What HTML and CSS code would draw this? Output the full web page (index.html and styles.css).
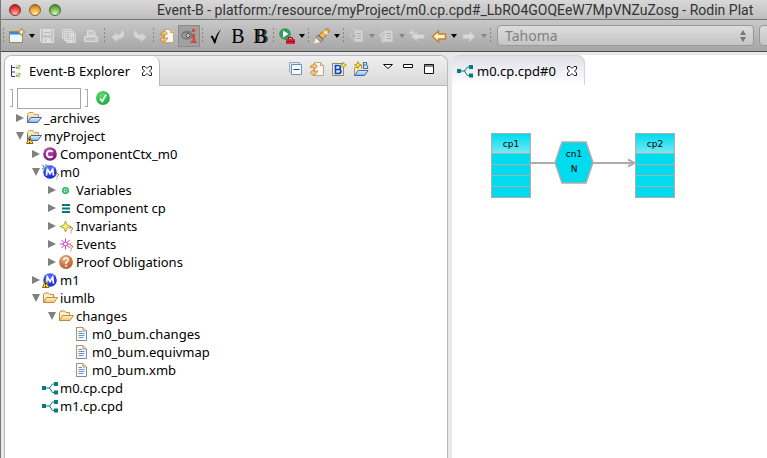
FILE: index.html
```html
<!DOCTYPE html>
<html lang="en">
<head>
<meta charset="utf-8">
<title>Event-B - Rodin Platform</title>
<link rel="stylesheet" href="styles.css">
</head>
<body>
<svg class="defs" aria-hidden="true">
  <defs>
    <linearGradient id="gFold" x1="0" y1="0" x2="0" y2="1"><stop offset="0" stop-color="#fff3d0"/><stop offset="1" stop-color="#f0c36c"/></linearGradient>
    <linearGradient id="gBlue" x1="0" y1="0" x2="0" y2="1"><stop offset="0" stop-color="#e4f1ff"/><stop offset="1" stop-color="#7fb2e8"/></linearGradient>
    <radialGradient id="gGreen" cx=".4" cy=".3" r=".8"><stop offset="0" stop-color="#5fdc70"/><stop offset="1" stop-color="#0da637"/></radialGradient>
    <radialGradient id="gOrange" cx=".4" cy=".25" r=".8"><stop offset="0" stop-color="#eab184"/><stop offset="1" stop-color="#b2571e"/></radialGradient>
    <radialGradient id="gPurple" cx=".4" cy=".25" r=".8"><stop offset="0" stop-color="#bb55b0"/><stop offset="1" stop-color="#7c0874"/></radialGradient>
    <radialGradient id="gM" cx=".4" cy=".25" r=".8"><stop offset="0" stop-color="#5570ff"/><stop offset="1" stop-color="#0a20d8"/></radialGradient>
  </defs>
  <symbol id="warn" viewBox="0 0 16 16"><path d="M3.500 8.500 L7 15.500 H.500 Z" fill="#ffe14a" stroke="#8a6a10"/><path d="M3.700 10.500V13M3.700 14V15" stroke="#000"/></symbol>
  <symbol id="folder-p" viewBox="0 0 16 16"><path d="M1.500 12.500V4.500L3 2.500H7L8.500 4.500H12.500V7" fill="url(#gFold)" stroke="#c99b4e"/><path d="M1.500 12.500V6" stroke="#5578a8"/><path d="M1.500 12.500L5 7.500H15.500L11.500 12.500Z" fill="url(#gBlue)" stroke="#3e68ac"/></symbol>
  <symbol id="folder" viewBox="0 0 16 16"><path d="M1.500 12.500V4.500L3 3H6.500L8 4.500H11.500V7" fill="#fff0cc" stroke="#c48a3c"/><path d="M1.500 12.500L4.500 7.500H15.500L12 12.500Z" fill="url(#gFold)" stroke="#c48a3c"/></symbol>
  <symbol id="ctx" viewBox="0 0 16 16"><circle cx="8" cy="8" r="6.800" fill="url(#gPurple)"/><path d="M10.700 5.900A3.300 3.300 0 1 0 10.700 10.100" fill="none" stroke="#fff" stroke-width="2"/></symbol>
  <symbol id="mch" viewBox="0 0 16 16"><circle cx="8" cy="8" r="6.800" fill="url(#gM)"/><path d="M4.500 11.500L5.300 5L8 9.500L10.700 5L11.500 11.500" fill="none" stroke="#fff" stroke-width="1.700"/></symbol>
  <symbol id="sparks" viewBox="0 0 16 16"><path d="M0 1L2 2M4 0V2M0 5L2 4M6 1L5 3M3 4H6M1 3H4" stroke="#4489a4"/></symbol>
  <symbol id="q" viewBox="0 0 16 16"><path d="M11.500 10.500Q13 8.500 14.500 10Q15 11.500 13 12.500V13.500M13 14.500V15.500" fill="none" stroke="#c56a35"/></symbol>
  <symbol id="var" viewBox="0 0 16 16"><circle cx="7.500" cy="8.500" r="2.700" fill="#e7ffe9" stroke="#25b467" stroke-width="1.600"/><path d="M6 8.500H9M7.500 7V10" stroke="#42c983"/></symbol>
  <symbol id="comp" viewBox="0 0 16 16"><path d="M4 5H12M4 8.500H12M4 12H12" stroke="#08767a" stroke-width="2"/></symbol>
  <symbol id="inv" viewBox="0 0 16 16"><path d="M7.500 3L9 7L13 8.500L9 10L7.500 14L6 10L2 8.500L6 7Z" fill="#fff36a" stroke="#a08e20" stroke-width=".800"/></symbol>
  <symbol id="evt" viewBox="0 0 16 16"><path d="M7.500 2.500V13.500M2 8H13M3.500 4L11.500 12M11.500 4L3.500 12" stroke="#cf39bd"/><circle cx="7.500" cy="8" r="2" fill="#fff" stroke="#d93bc9"/></symbol>
  <symbol id="po" viewBox="0 0 16 16"><circle cx="8" cy="8" r="6.900" fill="url(#gOrange)"/><path d="M5.700 6.200Q5.800 4 8 4Q10.500 4 10.300 6.200Q10 7.500 8 8.500V10" fill="none" stroke="#fff" stroke-width="1.500"/><path d="M7.200 11.200h1.700v1.600H7.200z" fill="#fff"/></symbol>
  <symbol id="file" viewBox="0 0 16 16"><path d="M2.500 1.500H9L12.500 5V14.500H2.500Z" fill="#f5f9ff" stroke="#7c8ba4"/><path d="M2.500 14.500V1.500H9" fill="none" stroke="#aa9861"/><path d="M9 1.500V5H12.500" fill="#f2dca0" stroke="#b8995a"/><path d="M4.500 5.500H8M4.500 7.500H10.500M4.500 9.500H10.500M4.500 11.500H9.500" stroke="#6b92d2"/></symbol>
  <symbol id="cpd" viewBox="0 0 16 16"><path d="M0 6h4v4H0zM12 2h4v4h-4zM12 10.500h4v4h-4z" fill="#087b7e"/><path d="M4 8H8M12 4H10.500L7.500 8L10.500 12.500H12" fill="none" stroke="#087b7e"/></symbol>
  <symbol id="close" viewBox="0 0 12 12"><path d="M1.500 1.500H4L6 3.500L8 1.500H10.500V4L8.500 6L10.500 8V10.500H8L6 8.500L4 10.500H1.500V8L3.500 6L1.500 4Z" fill="#fff" stroke="#222"/></symbol>
  <symbol id="star" viewBox="0 0 8 8"><path d="M4 .500L5 3L7.500 4L5 5L4 7.500L3 5L.500 4L3 3Z" fill="#ffed3a" stroke="#a68912" stroke-width=".800"/></symbol>
  <symbol id="sync" viewBox="0 0 16 16"><path d="M5.500 1.500H11.500L14.500 4.500V14.500H5.500Z" fill="#f8f7f3" stroke="#c1a875"/><path d="M11.500 1.500V4.500H14.500" fill="#ead8ab" stroke="#c1a875"/><path d="M1 6.500Q2 3 5 4V2L8.500 5.500L5 8.500V6.500Q3 6 1 6.500ZM8.500 9.500Q8 13.500 5 13V15L1 11.500L5 8.500V10.500Q7 11 8.500 9.500Z" fill="#f7c871" stroke="#bd8740" stroke-width=".800"/></symbol>
  <symbol id="import" viewBox="0 0 16 16"><path d="M5.500 2.500H13.500V13.500H5.500Z" fill="#d5d5d5" stroke="#c7c7c7"/><path d="M7.500 5.500H12M7.500 8H12M7.500 10.500H12" stroke="#a9a9a9"/></symbol>
</svg>

<div class="window">
  <header class="titlebar">
    <div class="lights">
      <button class="light red" aria-label="Close"></button>
      <button class="light amber" aria-label="Minimize"></button>
      <button class="light green" aria-label="Zoom"></button>
    </div>
    <h1 class="title">Event-B - platform:/resource/myProject/m0.cp.cpd#_LbRO4GOQEeW7MpVNZuZosg - Rodin Plat</h1>
  </header>

  <div class="toolbar">
    <span class="sep"></span>
    <button class="tool" aria-label="New"><svg viewBox="0 0 16 16"><path d="M.500 3.500H13.500V14.500H.500Z" fill="#eaf5fc" stroke="#a78a52"/><path d="M1 4H11V6.500H1Z" fill="#3589cb"/><path d="M12.500 0L13.700 2.800L16 4L13.700 5.200L12.500 8L11.300 5.200L9 4L11.300 2.800Z" fill="#fff0a8" stroke="#b3893c"/></svg></button>
    <button class="drop" aria-label="New menu"></button>
    <button class="tool" aria-label="Save" disabled><svg viewBox="0 0 16 16"><path d="M1.500 1.500H14.500V14.500H2.500L1.500 13.500Z" fill="#c4c4c4" stroke="#dedede"/><path d="M4 2h8v5H4zM4 10h8v4H4z" fill="#dcdcdc"/><path d="M5 4.500H11M6.500 11V14" stroke="#b8b8b8"/></svg></button>
    <button class="tool" aria-label="Save all" disabled><svg viewBox="0 0 16 16"><path d="M1.500 1.500H10.500V10.500H1.500ZM3.500 3.500H12.500V12.500H3.500ZM5.500 5.500H14.500V14.500H5.500Z" fill="#c4c4c4" stroke="#dadada"/><path d="M8 6h4v3H8zM8 11.500h4V14H8z" fill="#dcdcdc"/></svg></button>
    <button class="tool" aria-label="Print" disabled><svg viewBox="0 0 16 16"><path d="M4.500 8V2.500H10L12 4.500V8" fill="#cfcfcf" stroke="#dedede"/><path d="M1.500 8.500H14.500V13.500H1.500Z" fill="#c6c6c6" stroke="#dedede"/><path d="M6 5H10M4 11H12" stroke="#b5b5b5"/></svg></button>
    <span class="sep"></span>
    <button class="tool" aria-label="Undo" disabled><svg viewBox="0 0 16 16"><path d="M1.500 9L7 4.500V7Q11 7 12 2Q15 4 14 8Q12 11 7 11.500V14Z" fill="#d6d6d6" stroke="#c5c5c5" stroke-width=".600"/></svg></button>
    <button class="tool" aria-label="Redo" disabled><svg viewBox="0 0 16 16"><path d="M14.500 9L9 4.500V7Q5 7 4 2Q1 4 2 8Q4 11 9 11.500V14Z" fill="#d6d6d6" stroke="#c5c5c5" stroke-width=".600"/></svg></button>
    <span class="sep"></span>
    <button class="tool" aria-label="Refresh"><svg><use href="#sync"/></svg></button>
    <button class="tool pressed" aria-label="Show information" aria-pressed="true"><svg viewBox="0 0 16 16"><ellipse cx="6" cy="7.500" rx="5.500" ry="3.500" fill="#999" stroke="#686868"/><circle cx="7" cy="7.500" r="2" fill="#c8c8c8" stroke="#555"/><path d="M1 5Q5 1.500 10 4" fill="none" stroke="#777"/><circle cx="12.500" cy="2.500" r="1.700" fill="#cf493b"/><path d="M10 6H14V13H15.500V15H9.500V13H11.500V8H10Z" fill="#cf493b"/></svg></button>
    <span class="sep"></span>
    <button class="tool" aria-label="Check"><svg viewBox="0 0 16 16"><path d="M2.500 8.500L4.500 7.500L6.700 11.500Q9 5 13 1Q9 8 7.300 15.500H6.200Q4.500 10.500 2.500 8.500Z" fill="#000"/></svg></button>
    <button class="tool letter" aria-label="Bold B">B</button>
    <button class="tool letter double" aria-label="Double B">B</button>
    <span class="sep"></span>
    <button class="tool" aria-label="Run"><svg viewBox="0 0 16 16"><circle cx="6" cy="6" r="5.800" fill="#319c57"/><path d="M4 2.500L9.500 6L4 9.500Z" fill="#fff"/><path d="M7 11h9v5H7z" fill="#d9232e"/><path d="M9.500 11V9.500H13.500V11M7 13.500H16" fill="none" stroke="#8e1220"/></svg></button>
    <button class="drop" aria-label="Run menu"></button>
    <span class="sep"></span>
    <button class="tool" aria-label="Search"><svg viewBox="0 0 16 16"><path d="M5 7L12 1Q15 0 15.500 3L9 11Z" fill="#efb756" stroke="#a77532"/><path d="M10 3L13.500 6" stroke="#fff0bd" stroke-width="2"/><path d="M4 7L9 12L6.500 14L2 9.500Z" fill="#a9a6b0" stroke="#76737b"/><path d="M2 10L6 14L0 15.500Z" fill="#fff3bd"/></svg></button>
    <button class="drop" aria-label="Search menu"></button>
    <span class="sep"></span>
    <button class="tool" aria-label="Next annotation" disabled><svg viewBox="0 0 16 16"><use href="#import"/><path d="M3 1H6V7H8.500L4.500 11.500L.500 7H3Z" fill="#b4b4b4" stroke="#d5d5d5" stroke-width=".700"/></svg></button>
    <button class="drop off" aria-label="Next annotation menu" disabled></button>
    <button class="tool" aria-label="Previous annotation" disabled><svg viewBox="0 0 16 16"><use href="#import"/><path d="M3 14H6V8H8.500L4.500 3.500L.500 8H3Z" fill="#c5c5c5" stroke="#dedede" stroke-width=".700"/></svg></button>
    <button class="drop off" aria-label="Previous annotation menu" disabled></button>
    <button class="tool" aria-label="Last edit location" disabled><svg viewBox="0 0 16 16"><path d="M2.500 8.500L8 4V6.500H15V10.500H8V13Z" fill="#d9d9d9" stroke="#c4c4c4"/><path d="M3 2V7M.500 4.500H5.500M1 2.500L5 6.500M5 2.500L1 6.500" stroke="#d7d7d7"/></svg></button>
    <button class="tool" aria-label="Back"><svg viewBox="0 0 16 16"><path d="M1.500 8.500L7.500 3V6H14.500V11H7.500V14Z" fill="#fff1bd" stroke="#bd8432" stroke-width="1.400"/></svg></button>
    <button class="drop" aria-label="Back menu"></button>
    <button class="tool" aria-label="Forward" disabled><svg viewBox="0 0 16 16"><path d="M14 8.500L8.500 3.500V6.500H2V10.500H8.500V13.500Z" fill="#d9d9d9" stroke="#c8c8c8"/></svg></button>
    <button class="drop off" aria-label="Forward menu" disabled></button>
    <span class="sep"></span>
    <div class="combo font-combo">
      <select aria-label="Font" disabled><option>Tahoma</option></select>
      <svg class="stepper" viewBox="0 0 6 12"><path d="M3 0L6 5H0ZM3 12L6 7H0Z" fill="#777"/></svg>
    </div>
    <div class="combo size-combo"><select aria-label="Font size" disabled><option></option></select></div>
  </div>

  <main class="workbench">
    <section class="explorer">
      <div class="tabbar">
        <div class="tab explorer-tab">
          <svg class="tab-icon" viewBox="0 0 16 16"><path d="M3.500 2V13.500H7M3.500 4.500H7M3.500 9H7" fill="none" stroke="#30358e"/><path d="M8 2h4v4H8zM8 10h4v4H8z" fill="#f2efc7" stroke="#c4bb7f" stroke-width=".500"/><path d="M8 4L9.500 5.500L12 2M8 12L9.500 13.500L12 10" fill="none" stroke="#44a54c"/></svg>
          <span class="tab-name">Event-B Explorer</span>
          <button class="close" aria-label="Close Event-B Explorer"><svg><use href="#close"/></svg></button>
        </div>
        <div class="view-tools">
          <button class="tool" aria-label="Collapse all"><svg viewBox="0 0 16 16"><path d="M2.500 11.500V1.500H12.500V4" fill="none" stroke="#8fa9c6"/><path d="M4.500 3.500H14.500V13.500H4.500Z" fill="#f6faff" stroke="#6e8fb4"/><path d="M6.500 8.500H12.500" stroke="#15518b"/></svg></button>
          <button class="tool" aria-label="Link with editor"><svg><use href="#sync"/></svg></button>
          <button class="tool" aria-label="New component"><svg viewBox="0 0 16 16"><path d="M1.500 2.500H12.500V14.500H1.500Z" fill="#e5eff9" stroke="#a08352"/><path d="M4.500 4.500V12.500M3.500 4.500H7Q9.500 4.500 9.500 6.500T7 8.500H5M7 8.500Q10 8.500 10 10.500T7 12.500H3.500" fill="none" stroke="#1647b8" stroke-width="1.700"/><use href="#star" x="9" y="0" width="7" height="8"/></svg></button>
          <button class="tool" aria-label="New project"><svg viewBox="0 0 16 16"><path d="M1.500 14V6.500H4L6 4.500H8.500V8" fill="#ffe9b4" stroke="#bd9655"/><path d="M1.500 14.500L5 9.500H15L11.500 14.500Z" fill="url(#gBlue)" stroke="#3e68ac"/><path d="M10.500 1V8M10 1.500H13.500V4H10.500M14.500 4.500V7.500H10" fill="none" stroke="#397ba2" stroke-width="1.200"/><use href="#star" x="1" y="0" width="8" height="8"/></svg></button>
          <button class="tool small menu" aria-label="View menu"><svg viewBox="0 0 16 16"><path d="M3.500 3.500H12.500L8 7.500Z" fill="#fff" stroke="#111"/></svg></button>
          <button class="tool small" aria-label="Minimize view"><svg viewBox="0 0 16 16"><path d="M3.500 3.500H12.500V6.500H3.500Z" fill="#fff" stroke="#111"/></svg></button>
          <button class="tool" aria-label="Maximize view"><svg viewBox="0 0 16 16"><path d="M3.500 3.500H12.500V12.500H3.500ZM3 5H13" fill="#fff" stroke="#111"/></svg></button>
        </div>
      </div>
      <div class="filter">
        <span class="bracket"></span>
        <input type="text" aria-label="Filter">
        <span class="bracket"></span>
        <button class="tool ok" aria-label="Show discharged obligations"><svg viewBox="0 0 16 16"><circle cx="8" cy="8" r="6.900" fill="url(#gGreen)"/><path d="M5 8.500L7.200 11.500L11 4.500" fill="none" stroke="#fff" stroke-width="1.600"/></svg></button>
      </div>
      <ul class="tree">
        <li><div class="row"><i class="twisty"></i><svg><use href="#folder-p"/></svg><span>_archives</span></div></li>
        <li><div class="row"><i class="twisty open"></i><svg><use href="#folder-p"/><use href="#warn"/></svg><span>myProject</span></div>
          <ul>
            <li><div class="row"><i class="twisty"></i><svg><use href="#ctx"/></svg><span>ComponentCtx_m0</span></div></li>
            <li><div class="row"><i class="twisty open"></i><svg><use href="#mch"/><use href="#sparks"/><use href="#q" x="2"/></svg><span>m0</span></div>
              <ul>
                <li><div class="row"><i class="twisty"></i><svg><use href="#var"/></svg><span>Variables</span></div></li>
                <li><div class="row"><i class="twisty"></i><svg><use href="#comp"/></svg><span>Component cp</span></div></li>
                <li><div class="row"><i class="twisty"></i><svg><use href="#inv"/><use href="#q"/></svg><span>Invariants</span></div></li>
                <li><div class="row"><i class="twisty"></i><svg><use href="#evt"/><use href="#q"/></svg><span>Events</span></div></li>
                <li><div class="row"><i class="twisty"></i><svg><use href="#po"/></svg><span>Proof Obligations</span></div></li>
              </ul>
            </li>
            <li><div class="row"><i class="twisty"></i><svg><use href="#mch"/><use href="#warn"/></svg><span>m1</span></div></li>
            <li><div class="row"><i class="twisty open"></i><svg><use href="#folder"/></svg><span>iumlb</span></div>
              <ul>
                <li><div class="row"><i class="twisty open"></i><svg><use href="#folder"/></svg><span>changes</span></div>
                  <ul>
                    <li><div class="row"><i class="twisty leaf"></i><svg><use href="#file"/></svg><span>m0_bum.changes</span></div></li>
                    <li><div class="row"><i class="twisty leaf"></i><svg><use href="#file"/></svg><span>m0_bum.equivmap</span></div></li>
                    <li><div class="row"><i class="twisty leaf"></i><svg><use href="#file"/></svg><span>m0_bum.xmb</span></div></li>
                  </ul>
                </li>
              </ul>
            </li>
            <li><div class="row"><i class="twisty leaf"></i><svg><use href="#cpd"/></svg><span>m0.cp.cpd</span></div></li>
            <li><div class="row"><i class="twisty leaf"></i><svg><use href="#cpd"/></svg><span>m1.cp.cpd</span></div></li>
          </ul>
        </li>
      </ul>
    </section>

    <section class="editor">
      <div class="tab editor-tab">
        <svg class="tab-icon"><use href="#cpd"/></svg>
        <span class="tab-name">m0.cp.cpd#0</span>
        <button class="close" aria-label="Close m0.cp.cpd#0"><svg><use href="#close"/></svg></button>
      </div>
      <div class="canvas">
        <svg class="wires" viewBox="0 0 146 66"><path d="M39 30H64M102 30H142" stroke="#aeaeae" stroke-width="2"/><path d="M137 26.500L143.500 30L137 33.500" fill="none" stroke="#aeaeae" stroke-width="2"/></svg>
        <div class="component cp1"><b>cp1</b><i></i><i></i><i></i><i></i></div>
        <div class="connector"><svg viewBox="0 0 40 43"><path d="M8 1H32L39 21.500L32 42H8L1 21.500Z" fill="#00dbed" stroke="#aeaeae" stroke-width="1.500"/></svg><span>cn1</span><span>N</span></div>
        <div class="component cp2"><b>cp2</b><i></i><i></i><i></i><i></i></div>
      </div>
    </section>
  </main>
</div>
</body>
</html>
```
FILE: styles.css
```css
* { box-sizing: border-box; }

body {
  margin: 0;
  font: 13px/18px "Noto Sans", "Open Sans", sans-serif;
  color: #000;
  background: #e8e8e8;
}

button {
  padding: 0;
  border: 0;
  background: none;
  color: inherit;
  font: inherit;
}

svg { display: block; flex: none; overflow: visible; }
.defs { position: absolute; width: 0; height: 0; }

.window {
  display: flex;
  flex-direction: column;
  min-height: 100vh;
  overflow: hidden;
  border-left: 1px solid #777;
}

.titlebar {
  display: flex;
  align-items: center;
  height: 20px;
  gap: 96px;
  padding-left: 8px;
  background: linear-gradient(#d8d8d8, #bebebe);
  border-bottom: 1px solid #777;
}

.lights { display: flex; gap: 8px; }

.light {
  width: 12px;
  height: 12px;
  border: 1px solid #666;
  border-radius: 50%;
}
.red { background: radial-gradient(circle at 50% 90%, #ffc0b8, #e8433f 55%, #8e1c1c); border-color: #84302e; }
.amber { background: radial-gradient(circle at 50% 90%, #fff0a0, #eda33c 55%, #9a5c18); border-color: #8e6129; }
.green { background: radial-gradient(circle at 50% 90%, #dcffb8, #74b950 55%, #346e28); border-color: #41703a; }

.title {
  margin: 0;
  font: 400 14px/18px Roboto, "Noto Sans", sans-serif;
  white-space: nowrap;
  color: #333;
}

.toolbar {
  display: flex;
  align-items: center;
  height: 32px;
  background: linear-gradient(#c8c8c8, #a6a6a6);
  border-bottom: 1px solid #4c4c4c;
}

.tool {
  display: flex;
  flex: none;
  align-items: center;
  justify-content: center;
  width: 22px;
  height: 22px;
}
.tool svg { width: 16px; height: 16px; }
.pressed { background: #a0a0a0; border: 1px solid #8a8a8a; }

.letter { font: 20px/22px "Liberation Serif", serif; }
.double { text-shadow: 2px 0 #333; }

.drop {
  display: flex;
  flex: none;
  align-items: center;
  justify-content: center;
  width: 8px;
  height: 22px;
}
.drop::before {
  content: "";
  width: 0;
  border: 3px solid transparent;
  border-top: 4px solid #000;
  border-bottom: 0;
}
.off::before { border-top-color: #858585; }

.sep {
  flex: none;
  width: 5px;
  height: 16px;
  background: repeating-linear-gradient(#8b866d 0 2px, transparent 2px 4px) center / 1px 100% no-repeat;
}

.combo {
  display: flex;
  align-items: center;
  flex: none;
  height: 21px;
  margin-left: 4px;
  padding: 0 7px;
  border: 1px solid #999;
  border-radius: 4px;
  background: linear-gradient(#dcdcdc, #c5c5c5);
}
.combo select {
  flex: 1;
  min-width: 0;
  padding: 0;
  border: 0;
  appearance: none;
  background: none;
  color: #808080;
  opacity: 1;
  font: 14px/18px "Noto Sans", "Open Sans", sans-serif;
}
.font-combo { width: 257px; }
.size-combo { width: 60px; margin-left: 5px; }
.stepper { width: 6px; height: 12px; }

.workbench {
  display: flex;
  flex: 1;
  gap: 4px;
  padding: 3px 0 0 3px;
}

.explorer {
  flex: 0 1 444px;
  border: 1px solid #b8b8be;
  border-bottom: 0;
  border-radius: 8px 8px 0 0;
  background: #fff;
}

.tabbar {
  display: flex;
  justify-content: space-between;
  height: 30px;
  border-bottom: 1px solid #b8b8be;
  border-radius: 7px 7px 0 0;
  background: linear-gradient(#f0f0f0, #d9d9d9);
}

.tab { display: flex; align-items: center; height: 30px; }
.tab-icon { width: 16px; height: 16px; }
.tab-name { white-space: nowrap; }
.close svg { width: 12px; height: 12px; }

.explorer-tab {
  width: 155px;
  gap: 5px;
  padding-left: 3px;
  border-right: 1px solid #b8b8be;
  border-radius: 7px 7px 0 0;
  background: #fff;
}
.explorer-tab .close, .editor-tab .close { margin-left: auto; margin-right: 6px; }

.view-tools { display: flex; padding: 2px 7px 0 0; }
.small { width: 20px; }
.menu { margin-left: 6px; }

.filter {
  display: flex;
  align-items: center;
  gap: 4px;
  height: 22px;
  margin-top: 1px;
  padding-left: 5px;
}
.filter input {
  width: 64px;
  height: 21px;
  padding: 0 3px;
  border: 1px solid #a6a6a6;
  font: inherit;
}
.bracket {
  width: 3px;
  height: 18px;
  border: 1px solid #a9a9a9;
  border-left: 0;
}

.tree, .tree ul { margin: 0; padding: 0; list-style: none; }
.tree { padding-left: 11px; }
.tree ul { padding-left: 16px; }

.row { display: flex; align-items: center; height: 18px; white-space: nowrap; }
.row svg { width: 16px; height: 16px; margin-right: 2px; }

.twisty { flex: none; width: 10px; }
.twisty::before {
  content: "";
  display: block;
  width: 0;
  border: 4px solid transparent;
  border-left: 8px solid #808080;
  border-right: 0;
}
.open::before {
  border: 4px solid transparent;
  border-top: 8px solid #808080;
  border-bottom: 0;
}
.leaf::before { visibility: hidden; }

.editor {
  flex: 1;
  min-width: 0;
  border-radius: 8px 0 0 0;
  background: #fff;
}
.editor-tab {
  width: 133px;
  gap: 4px;
  padding-left: 5px;
  border: 1px solid #d2d3da;
  border-width: 1px 1px 0 0;
  border-radius: 8px 8px 0 0;
  background: linear-gradient(#dfe0e7, #fff);
}

/* Diagram nodes sit at free positions on the canvas. */
.canvas { position: relative; height: 300px; }
.canvas > * { position: absolute; }
.wires { left: 39px; top: 48px; width: 146px; height: 66px; }
.component {
  top: 48px;
  width: 40px;
  border: 1px solid #aeaeae;
  background: #00dbed;
  font: 9px/20px "DejaVu Sans", sans-serif;
  text-align: center;
}
.component b {
  display: block;
  height: 19px;
  font-weight: 400;
  background: linear-gradient(#00dbed, #75e9f3);
}
.component i { display: block; height: 11px; border-top: 1px solid #aeaeae; }
.cp1 { left: 39px; }
.cp2 { left: 183px; }
.connector {
  left: 102px;
  top: 56px;
  width: 40px;
  height: 43px;
  padding-top: 6px;
  font: 9px/15px "DejaVu Sans", sans-serif;
  text-align: center;
}
.connector svg { position: absolute; inset: 0; width: 40px; height: 43px; }
.connector span { position: relative; display: block; }
```
